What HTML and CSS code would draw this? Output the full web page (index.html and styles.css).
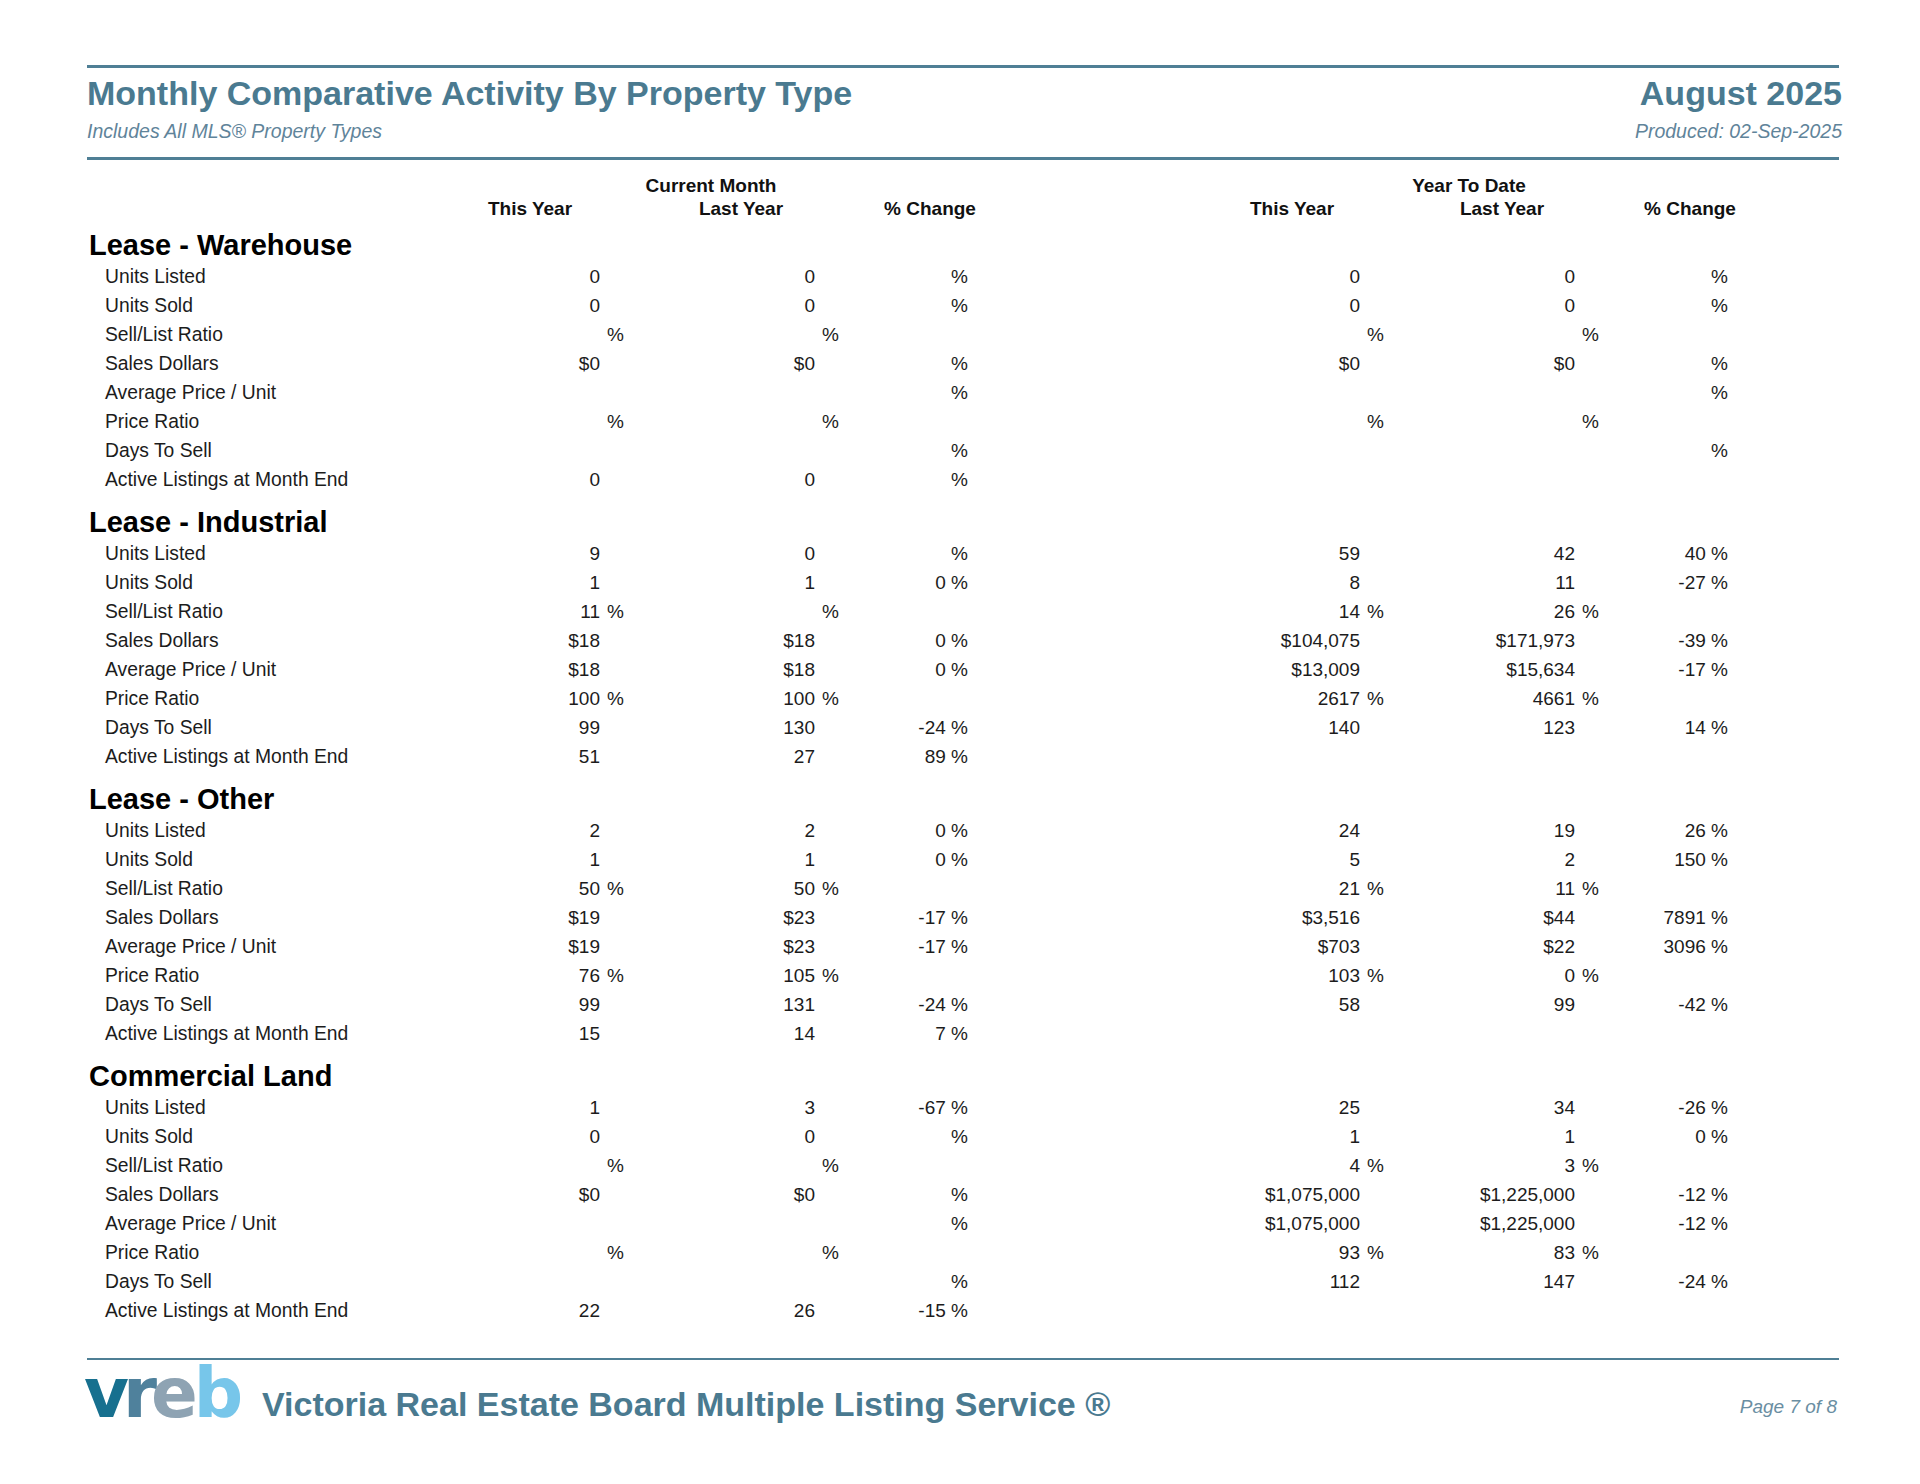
FILE: index.html
```html
<!DOCTYPE html>
<html lang="en">
<head>
<meta charset="utf-8">
<title>Monthly Comparative Activity By Property Type</title>
<link rel="stylesheet" href="styles.css">
</head>
<body>
<div class="page">
  <header class="report-head">
    <div class="head-left">
      <h1 class="title">Monthly Comparative Activity By Property Type</h1>
      <div class="subtitle">Includes All MLS® Property Types</div>
    </div>
    <div class="head-right">
      <div class="title">August 2025</div>
      <div class="subtitle">Produced: 02-Sep-2025</div>
    </div>
  </header>

  <div class="col-groups">
    <span></span><span>Current Month</span><span></span><span>Year To Date</span>
  </div>
  <div class="col-heads">
    <span></span><span>This Year</span><span>Last Year</span><span>% Change</span><span></span><span>This Year</span><span>Last Year</span><span>% Change</span>
  </div>

  <section class="ptype first">
    <h2>Lease - Warehouse</h2>
    <div class="row"><span class="lbl">Units Listed</span><span>0</span><span></span><span>0</span><span></span><span>%</span><span>0</span><span></span><span>0</span><span></span><span>%</span></div>
    <div class="row"><span class="lbl">Units Sold</span><span>0</span><span></span><span>0</span><span></span><span>%</span><span>0</span><span></span><span>0</span><span></span><span>%</span></div>
    <div class="row"><span class="lbl">Sell/List Ratio</span><span></span><span>%</span><span></span><span>%</span><span></span><span></span><span>%</span><span></span><span>%</span><span></span></div>
    <div class="row"><span class="lbl">Sales Dollars</span><span>$0</span><span></span><span>$0</span><span></span><span>%</span><span>$0</span><span></span><span>$0</span><span></span><span>%</span></div>
    <div class="row"><span class="lbl">Average Price / Unit</span><span></span><span></span><span></span><span></span><span>%</span><span></span><span></span><span></span><span></span><span>%</span></div>
    <div class="row"><span class="lbl">Price Ratio</span><span></span><span>%</span><span></span><span>%</span><span></span><span></span><span>%</span><span></span><span>%</span><span></span></div>
    <div class="row"><span class="lbl">Days To Sell</span><span></span><span></span><span></span><span></span><span>%</span><span></span><span></span><span></span><span></span><span>%</span></div>
    <div class="row"><span class="lbl">Active Listings at Month End</span><span>0</span><span></span><span>0</span><span></span><span>%</span><span></span><span></span><span></span><span></span><span></span></div>
  </section>

  <section class="ptype">
    <h2>Lease - Industrial</h2>
    <div class="row"><span class="lbl">Units Listed</span><span>9</span><span></span><span>0</span><span></span><span>%</span><span>59</span><span></span><span>42</span><span></span><span>40 %</span></div>
    <div class="row"><span class="lbl">Units Sold</span><span>1</span><span></span><span>1</span><span></span><span>0 %</span><span>8</span><span></span><span>11</span><span></span><span>-27 %</span></div>
    <div class="row"><span class="lbl">Sell/List Ratio</span><span>11</span><span>%</span><span></span><span>%</span><span></span><span>14</span><span>%</span><span>26</span><span>%</span><span></span></div>
    <div class="row"><span class="lbl">Sales Dollars</span><span>$18</span><span></span><span>$18</span><span></span><span>0 %</span><span>$104,075</span><span></span><span>$171,973</span><span></span><span>-39 %</span></div>
    <div class="row"><span class="lbl">Average Price / Unit</span><span>$18</span><span></span><span>$18</span><span></span><span>0 %</span><span>$13,009</span><span></span><span>$15,634</span><span></span><span>-17 %</span></div>
    <div class="row"><span class="lbl">Price Ratio</span><span>100</span><span>%</span><span>100</span><span>%</span><span></span><span>2617</span><span>%</span><span>4661</span><span>%</span><span></span></div>
    <div class="row"><span class="lbl">Days To Sell</span><span>99</span><span></span><span>130</span><span></span><span>-24 %</span><span>140</span><span></span><span>123</span><span></span><span>14 %</span></div>
    <div class="row"><span class="lbl">Active Listings at Month End</span><span>51</span><span></span><span>27</span><span></span><span>89 %</span><span></span><span></span><span></span><span></span><span></span></div>
  </section>

  <section class="ptype">
    <h2>Lease - Other</h2>
    <div class="row"><span class="lbl">Units Listed</span><span>2</span><span></span><span>2</span><span></span><span>0 %</span><span>24</span><span></span><span>19</span><span></span><span>26 %</span></div>
    <div class="row"><span class="lbl">Units Sold</span><span>1</span><span></span><span>1</span><span></span><span>0 %</span><span>5</span><span></span><span>2</span><span></span><span>150 %</span></div>
    <div class="row"><span class="lbl">Sell/List Ratio</span><span>50</span><span>%</span><span>50</span><span>%</span><span></span><span>21</span><span>%</span><span>11</span><span>%</span><span></span></div>
    <div class="row"><span class="lbl">Sales Dollars</span><span>$19</span><span></span><span>$23</span><span></span><span>-17 %</span><span>$3,516</span><span></span><span>$44</span><span></span><span>7891 %</span></div>
    <div class="row"><span class="lbl">Average Price / Unit</span><span>$19</span><span></span><span>$23</span><span></span><span>-17 %</span><span>$703</span><span></span><span>$22</span><span></span><span>3096 %</span></div>
    <div class="row"><span class="lbl">Price Ratio</span><span>76</span><span>%</span><span>105</span><span>%</span><span></span><span>103</span><span>%</span><span>0</span><span>%</span><span></span></div>
    <div class="row"><span class="lbl">Days To Sell</span><span>99</span><span></span><span>131</span><span></span><span>-24 %</span><span>58</span><span></span><span>99</span><span></span><span>-42 %</span></div>
    <div class="row"><span class="lbl">Active Listings at Month End</span><span>15</span><span></span><span>14</span><span></span><span>7 %</span><span></span><span></span><span></span><span></span><span></span></div>
  </section>

  <section class="ptype">
    <h2>Commercial Land</h2>
    <div class="row"><span class="lbl">Units Listed</span><span>1</span><span></span><span>3</span><span></span><span>-67 %</span><span>25</span><span></span><span>34</span><span></span><span>-26 %</span></div>
    <div class="row"><span class="lbl">Units Sold</span><span>0</span><span></span><span>0</span><span></span><span>%</span><span>1</span><span></span><span>1</span><span></span><span>0 %</span></div>
    <div class="row"><span class="lbl">Sell/List Ratio</span><span></span><span>%</span><span></span><span>%</span><span></span><span>4</span><span>%</span><span>3</span><span>%</span><span></span></div>
    <div class="row"><span class="lbl">Sales Dollars</span><span>$0</span><span></span><span>$0</span><span></span><span>%</span><span>$1,075,000</span><span></span><span>$1,225,000</span><span></span><span>-12 %</span></div>
    <div class="row"><span class="lbl">Average Price / Unit</span><span></span><span></span><span></span><span></span><span>%</span><span>$1,075,000</span><span></span><span>$1,225,000</span><span></span><span>-12 %</span></div>
    <div class="row"><span class="lbl">Price Ratio</span><span></span><span>%</span><span></span><span>%</span><span></span><span>93</span><span>%</span><span>83</span><span>%</span><span></span></div>
    <div class="row"><span class="lbl">Days To Sell</span><span></span><span></span><span></span><span></span><span>%</span><span>112</span><span></span><span>147</span><span></span><span>-24 %</span></div>
    <div class="row"><span class="lbl">Active Listings at Month End</span><span>22</span><span></span><span>26</span><span></span><span>-15 %</span><span></span><span></span><span></span><span></span><span></span></div>
  </section>

  <footer class="report-foot">
    <div class="logo"><span class="lv">v</span><span class="lr">r</span><span class="le">e</span><span class="lb">b</span></div>
    <div class="foot-name">Victoria Real Estate Board Multiple Listing Service ®</div>
    <div class="foot-page">Page 7 of 8</div>
  </footer>
</div>
</body>
</html>
```

FILE: styles.css
```css
html, body {
  margin: 0;
  padding: 0;
  background: #ffffff;
}

body {
  font-family: "Liberation Sans", Arial, sans-serif;
  color: #1c1c1c;
}

.page {
  width: 1752px;
  padding: 65px 81px 0 87px;
}

/* ---------- Report header ---------- */
.report-head {
  display: flex;
  justify-content: space-between;
  border-top: 3px solid #4f7f95;
  border-bottom: 3px solid #4f7f95;
  padding: 5px 0 14px 0;
}

.head-right {
  text-align: right;
  margin-right: -3px;
}

.title {
  margin: 0;
  font-size: 34px;
  line-height: 40px;
  font-weight: bold;
  color: #4a7a90;
}

.subtitle {
  margin-top: 6px;
  font-size: 19.5px;
  line-height: 24px;
  font-style: italic;
  color: #5f849a;
}

/* ---------- Column headers ---------- */
.col-groups,
.col-heads {
  display: grid;
  font-size: 19px;
  line-height: 23px;
  font-weight: bold;
  color: #111;
  text-align: center;
}

.col-groups {
  margin-top: 14px;
  grid-template-columns: 353px 542px 218px 538px;
}

.col-heads {
  grid-template-columns: 353px 180px 242px 136px 202px 184px 236px 140px;
}

/* ---------- Property type sections ---------- */
.ptype {
  margin-top: 11px;
}

.ptype.first {
  margin-top: 8px;
}

.ptype h2 {
  margin: 0 0 0 2px;
  font-size: 29px;
  line-height: 34px;
  font-weight: bold;
  color: #000;
}

.row {
  display: grid;
  grid-template-columns: 353px 160px 40px 175px 40px 113px 392px 40px 175px 40px 113px;
  height: 29px;
  font-size: 19px;
  line-height: 29px;
  color: #1c1c1c;
  white-space: nowrap;
}

.row > span {
  text-align: right;
}

.row > span:nth-child(3),
.row > span:nth-child(5),
.row > span:nth-child(8),
.row > span:nth-child(10) {
  text-align: left;
  padding-left: 7px;
}

.row > .lbl {
  text-align: left;
  padding-left: 18px;
  font-size: 19.3px;
}

/* ---------- Footer ---------- */
.report-foot {
  display: flex;
  align-items: flex-start;
  margin-top: 32.9px;
  border-top: 2px solid #4f7f95;
  height: 80px;
}

.logo {
  width: 178px;
  margin-left: -3px;
  margin-top: 3px;
  font-family: "DejaVu Sans", sans-serif;
  font-weight: bold;
  font-size: 69px;
  line-height: 60px;
  letter-spacing: -6px;
  white-space: nowrap;
}

.logo .lv { color: #17708f; }
.logo .lr { color: #4f819c; }
.logo .le { color: #8ea3b3; letter-spacing: -4px; }
.logo .lb { color: #77c6ea; }

.foot-name {
  margin-top: 24px;
  font-size: 34px;
  line-height: 40px;
  font-weight: bold;
  color: #4a7a90;
  white-space: nowrap;
}

.foot-page {
  margin-left: auto;
  margin-right: 2px;
  margin-top: 35px;
  font-size: 19px;
  line-height: 24px;
  font-style: italic;
  color: #6a8ea2;
}
```
